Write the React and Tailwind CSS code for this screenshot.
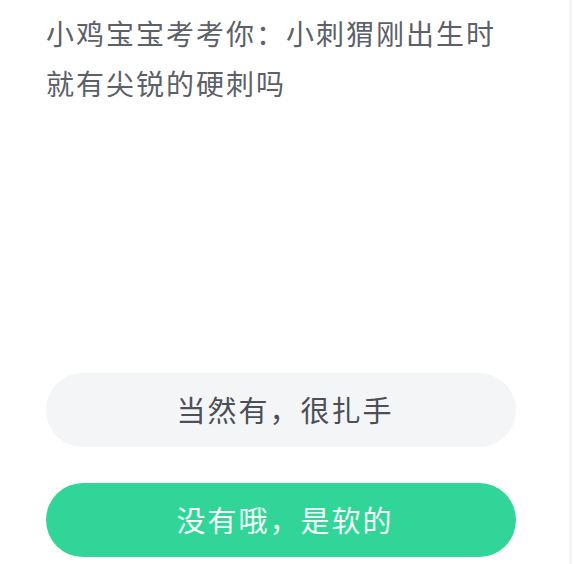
// Quiz card: question on top, two answer pills at the bottom
const font = "font-['Noto_Sans_CJK_SC','Noto_Sans',sans-serif]";

function Option({ label, selected }) {
  return (
    <button
      className={
        'flex h-[74px] w-[470px] items-center justify-center rounded-full pl-[8px] text-[29px] tracking-[2px] ' +
        (selected ? 'bg-[#30d597] text-[#f4fffa]' : 'bg-[#f4f5f7] text-[#4b4f57]')
      }
    >
      {label}
    </button>
  );
}

export default function App() {
  return (
    <div className={`flex h-[564px] w-[574px] bg-white ${font}`}>
      <div className="flex w-[569px] flex-col pl-[46px] pt-[8px]">
        <p className="w-[470px] text-[28px] leading-[50px] tracking-[2px] text-[#5c6069]">
          小鸡宝宝考考你：小刺猬刚出生时就有尖锐的硬刺吗
        </p>
        <div className="mt-auto flex flex-col gap-[36px] pb-[7px]">
          <Option label="当然有，很扎手" />
          <Option label="没有哦，是软的" selected />
        </div>
      </div>
      <div className="h-full w-[3px] bg-[#f3f3f3]" />
    </div>
  );
}
